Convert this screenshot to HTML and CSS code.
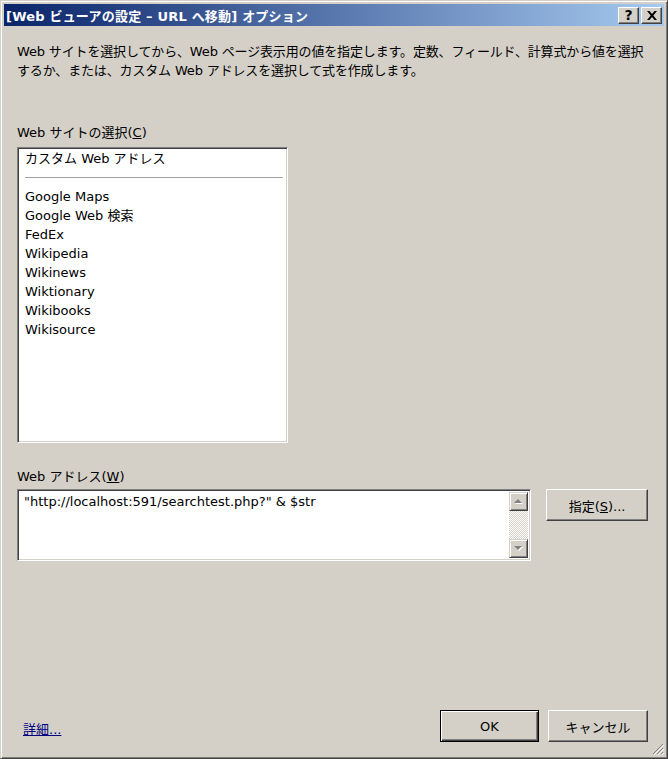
FILE: index.html
```html
<!DOCTYPE html>
<html lang="ja">
<head>
  <meta charset="UTF-8" />
  <title>Web ビューアの設定 - URL へ移動 オプション</title>
  <link rel="stylesheet" href="styles.css">
</head>
<body>
  <div class="window">
    <div class="titlebar">
      <span class="title">[Web ビューアの設定 – URL へ移動] オプション</span>
      <div class="caption-buttons">
        <span class="cap-btn help">?</span>
        <span class="cap-btn close">
          <svg width="10" height="9" viewBox="0 0 10 9"><path d="M0 0h2.5l2.5 3 2.5-3H10L6.3 4.5 10 9H7.5L5 6 2.5 9H0l3.7-4.5z" fill="#000"/></svg>
        </span>
      </div>
    </div>

    <div class="content">
      <p class="desc">
        <span>Web サイトを選択してから、Web ページ表示用の値を指定します。定数、フィールド、計算式から値を選択</span>
        <span>するか、または、カスタム Web アドレスを選択して式を作成します。</span>
      </p>

      <div class="label label-sites">Web サイトの選択(<u>C</u>)</div>
      <div class="listbox">
        <div class="item">カスタム Web アドレス</div>
        <div class="separator"></div>
        <div class="item">Google Maps</div>
        <div class="item">Google Web 検索</div>
        <div class="item">FedEx</div>
        <div class="item">Wikipedia</div>
        <div class="item">Wikinews</div>
        <div class="item">Wiktionary</div>
        <div class="item">Wikibooks</div>
        <div class="item">Wikisource</div>
      </div>

      <div class="label label-url">Web アドレス(<u>W</u>)</div>
      <div class="url-row">
        <div class="textarea">
          <div class="text">"http://localhost:591/searchtest.php?" &amp; $str</div>
          <div class="scrollbar">
            <span class="arrow">
              <svg width="9" height="6" viewBox="0 0 9 6"><path d="M5 1l4 4H1z" fill="#fff"/><path d="M4 0l4 4H0z" fill="#808080"/></svg>
            </span>
            <span class="track"></span>
            <span class="arrow">
              <svg width="9" height="6" viewBox="0 0 9 6"><path d="M1 1h8L5 5z" fill="#fff"/><path d="M0 0h8L4 4z" fill="#808080"/></svg>
            </span>
          </div>
        </div>
        <button class="btn btn-specify">指定(<u>S</u>)...</button>
      </div>

      <div class="footer">
        <a class="more" href="#">詳細...</a>
        <div class="footer-buttons">
          <button class="btn btn-default">OK</button>
          <button class="btn">キャンセル</button>
        </div>
      </div>
    </div>

    <svg class="grip" width="12" height="12" viewBox="0 0 12 12">
      <path d="M11 1L1 11M11 5L5 11M11 9L9 11" stroke="#808080" stroke-width="1"/>
      <path d="M12 2L2 12M12 6L6 12M12 10L10 12" stroke="#fff" stroke-width="1"/>
    </svg>
  </div>
</body>
</html>
```

FILE: styles.css
```css
html, body {
  margin: 0;
  padding: 0;
}
body {
  background: #d4d0c8;
  font-family: "DejaVu Sans", "Noto Sans CJK JP", sans-serif;
  font-size: 13px;
  color: #000;
}
.window {
  position: relative;
  box-sizing: border-box;
  width: 668px;
  height: 759px;
  padding: 3px;
  border: 1px solid;
  border-color: #d4d0c8 #404040 #404040 #d4d0c8;
  box-shadow: inset 1px 1px #fff, inset -1px -1px #808080;
  display: flex;
  flex-direction: column;
}
.titlebar {
  height: 22px;
  background: linear-gradient(90deg, #0a246a, #a6caf0);
  display: flex;
  align-items: center;
  justify-content: space-between;
  padding: 0 2px 0 2px;
}
.title {
  color: #fff;
  font-weight: bold;
  font-size: 13px;
  letter-spacing: 0.2px;
  white-space: nowrap;
}
.caption-buttons {
  display: flex;
  gap: 2px;
}
.cap-btn {
  box-sizing: border-box;
  width: 21px;
  height: 17px;
  background: #d4d0c8;
  border: 1px solid;
  border-color: #fff #404040 #404040 #fff;
  box-shadow: inset -1px -1px #808080;
  display: flex;
  align-items: center;
  justify-content: center;
  font-family: "DejaVu Sans", sans-serif;
  font-weight: bold;
  font-size: 14px;
  line-height: 1;
}
.content {
  flex: 1;
  display: flex;
  flex-direction: column;
  padding: 0 16px 13px 13px;
}
.desc {
  margin: 16px 0 0;
  line-height: 19px;
  letter-spacing: -0.15px;
}
.desc span {
  display: block;
  white-space: nowrap;
}
.label {
  line-height: 18px;
  white-space: nowrap;
}
.label-sites {
  margin-top: 44px;
  margin-bottom: 5px;
}
.label-url {
  margin-top: 25px;
  margin-bottom: 3px;
}
.listbox {
  box-sizing: border-box;
  width: 271px;
  height: 296px;
  background: #fff;
  border: 1px solid;
  border-color: #808080 #fff #fff #808080;
  box-shadow: inset 1px 1px #404040, inset -1px -1px #d4d0c8;
  padding: 1px 4px 0 7px;
}
.item {
  line-height: 19px;
  white-space: nowrap;
}
.separator {
  height: 19px;
  position: relative;
}
.separator::after {
  content: "";
  display: block;
  position: absolute;
  left: 0;
  right: 0;
  top: 9px;
  border-top: 1px solid #a0a0a0;
}
.url-row {
  display: flex;
  align-items: flex-start;
  gap: 15px;
}
.textarea {
  box-sizing: border-box;
  width: 515px;
  height: 72px;
  background: #fff;
  border: 1px solid;
  border-color: #808080 #fff #fff #808080;
  box-shadow: inset 1px 1px #404040, inset -1px -1px #d4d0c8;
  padding: 2px;
  display: flex;
}
.textarea .text {
  flex: 1;
  padding: 1px 4px;
  line-height: 18px;
  white-space: nowrap;
}
.scrollbar {
  width: 19px;
  display: flex;
  flex-direction: column;
}
.arrow {
  box-sizing: border-box;
  height: 19px;
  background: #d4d0c8;
  border: 1px solid;
  border-color: #d4d0c8 #404040 #404040 #d4d0c8;
  box-shadow: inset 1px 1px #fff, inset -1px -1px #808080;
  display: flex;
  align-items: center;
  justify-content: center;
}
.track {
  flex: 1;
  background-color: #fff;
  background-image: repeating-conic-gradient(#d4d0c8 0 25%, #fff 0 50%);
  background-size: 2px 2px;
}
.btn {
  box-sizing: border-box;
  height: 32px;
  background: #d4d0c8;
  border: 1px solid;
  border-color: #fff #404040 #404040 #fff;
  box-shadow: inset -1px -1px #808080;
  font-family: "DejaVu Sans", "Noto Sans CJK JP", sans-serif;
  font-size: 13px;
  color: #000;
  padding: 0;
  white-space: nowrap;
}
.btn-specify {
  width: 102px;
}
.footer {
  margin-top: auto;
  display: flex;
  align-items: center;
  justify-content: space-between;
}
.more {
  margin-left: 6px;
  margin-top: 5px;
  color: #000080;
  text-decoration: underline;
}
.footer-buttons {
  display: flex;
  gap: 9px;
}
.footer-buttons .btn {
  width: 100px;
}
.footer-buttons .btn-default {
  width: 99px;
  border: 1px solid #000;
  box-shadow: inset 1px 1px #fff, inset -1px -1px #404040, inset -2px -2px #808080;
}
.grip {
  position: absolute;
  right: 3px;
  bottom: 3px;
}
```
